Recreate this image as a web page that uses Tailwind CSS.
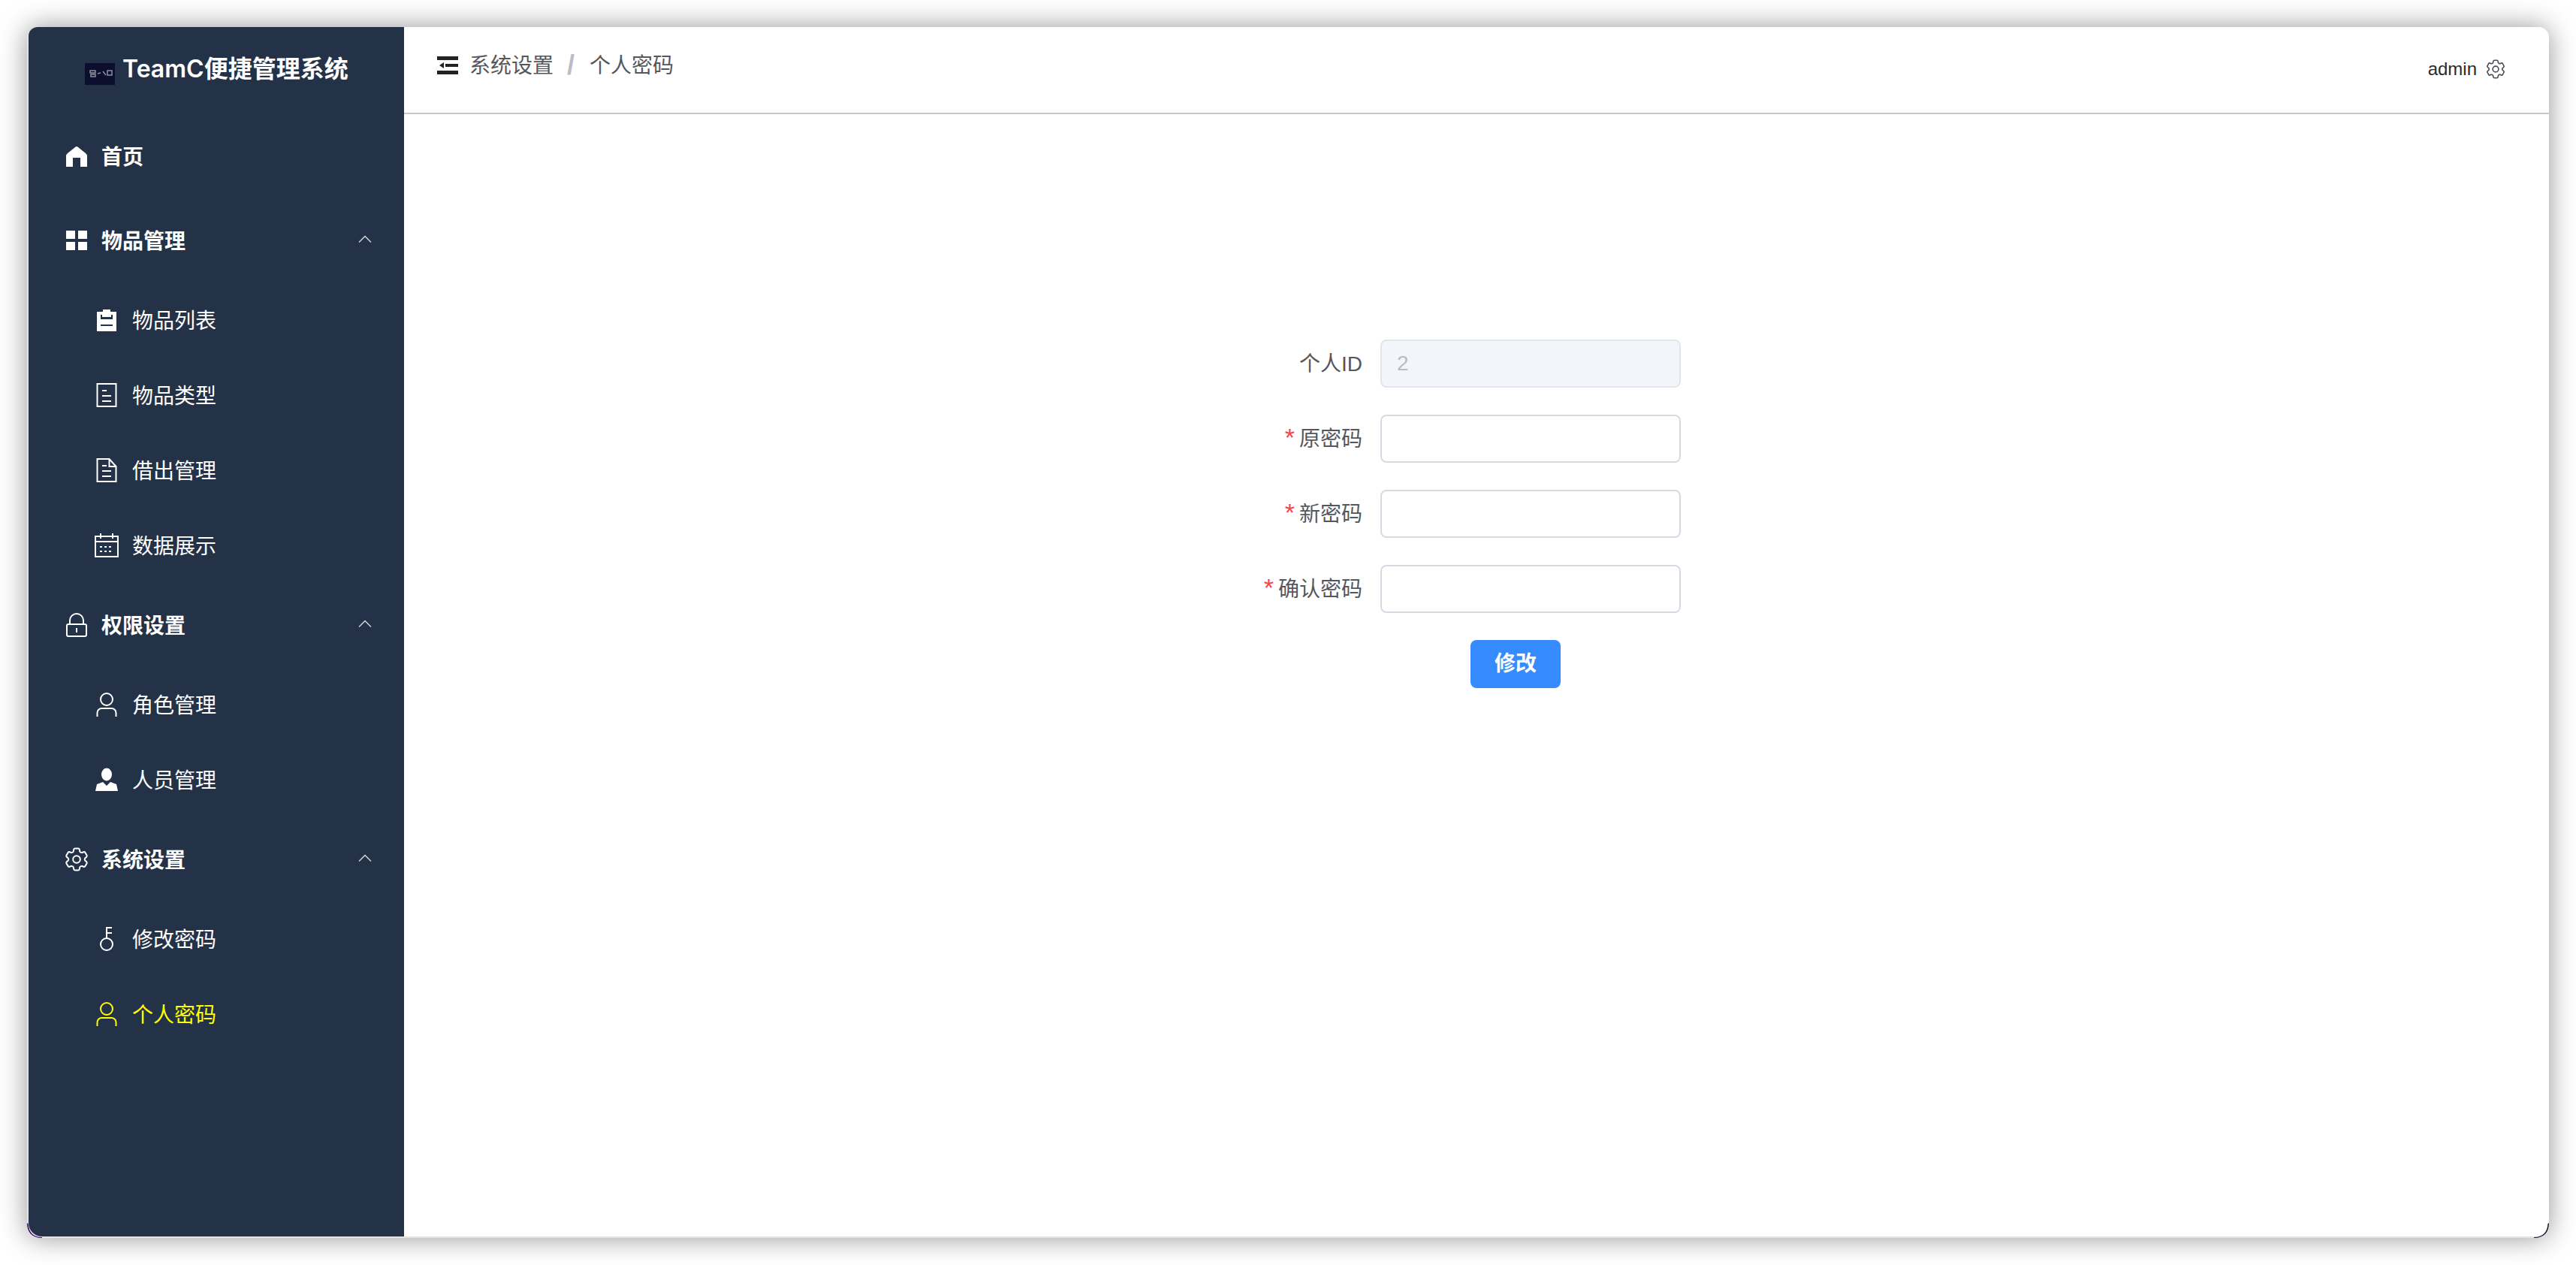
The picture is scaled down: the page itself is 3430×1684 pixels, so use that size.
<!DOCTYPE html>
<html lang="zh-CN">
<head>
    <meta charset="UTF-8">
    <title>TeamC便捷管理系统</title>
    <script src="https://cdn.jsdelivr.net/npm/@tailwindcss/browser@4"></script>
</head>
<body class="bg-white h-screen p-[36px] font-['Liberation_Sans','Noto_Sans_CJK_SC',sans-serif] overflow-hidden">
<div class="relative h-full flex rounded-[14px] bg-[#e3e3e3] border-l-2 border-b-2 border-[#e3e3e3] shadow-[0_0_36px_rgba(0,0,0,0.42)]">
    <!-- 侧边栏 -->
    <aside class="w-[500px] shrink-0 bg-[#233246] text-white rounded-tl-[12px] rounded-bl-[18px] overflow-hidden">
        <div class="h-[116px] flex items-start pl-[75px] pt-[36px]">
            <svg class="w-[40px] h-[29px] mt-[12px] shrink-0" viewBox="0 0 40 29">
                <rect width="40" height="29" fill="#0b0e2c"/>
                <path d="M7 10h7v3H7zM8 15h6v3H8zM17 14l4-1M24 11l4 5M30 10h6v6h-6z" fill="none" stroke="#8d8f9e" stroke-width="1.5"/>
            </svg>
            <span class="ml-[10px] text-[32px] leading-[40px] font-semibold whitespace-nowrap font-['Inter','Noto_Sans_CJK_SC',sans-serif]">TeamC便捷管理系统</span>
        </div>

        <div class="h-[112px] flex items-center pl-[48px] font-bold text-[28px]">
            <svg class="w-[32px] h-[32px] shrink-0" viewBox="0 0 32 32" fill="#fff"><path d="M16 3 Q17 3 18 4 L28 12 Q30 14 30 15 V30 H21 V18 H11 V30 H2 V15 Q2 14 4 12 L14 4 Q15 3 16 3Z"/></svg>
            <span class="ml-[17px] pt-[3px]">首页</span>
        </div>

        <div class="h-[112px] flex items-center pl-[48px] pr-[43px] font-bold text-[28px]">
            <svg class="w-[32px] h-[32px] shrink-0" viewBox="0 0 32 32" fill="#fff"><path d="M2 3h12v11H2zM18 3h12v11H18zM2 18h12v11H2zM18 18h12v11H18z"/></svg>
            <span class="ml-[17px] pt-[3px]">物品管理</span>
            <svg class="ml-auto mb-[5px] w-[18px] h-[10px]" viewBox="0 0 18 10" fill="none" stroke="#d0d4da" stroke-width="1.5"><path d="M1 9.5 9 1.5l8 8"/></svg>
        </div>
        <div class="h-[100px] flex items-center pl-[88px] text-[28px]">
            <svg class="w-[32px] h-[32px] shrink-0" viewBox="0 0 32 32"><path fill="#fff" d="M11 2h10v3h8v26H3V5h8z"/><path fill="#233246" d="M8 9h16v6H8zM8 22h16v2H8z"/><path fill="#fff" d="M10 9h12v3H10z"/></svg>
            <span class="ml-[18px] pt-[3px]">物品列表</span>
        </div>
        <div class="h-[100px] flex items-center pl-[88px] text-[28px]">
            <svg class="w-[32px] h-[32px] shrink-0" viewBox="0 0 32 32" fill="none" stroke="#fff" stroke-width="2"><path d="M3.5 1h25v30h-25zM10 10h6M10 17h12M10 24h12"/></svg>
            <span class="ml-[18px] pt-[3px]">物品类型</span>
        </div>
        <div class="h-[100px] flex items-center pl-[88px] text-[28px]">
            <svg class="w-[32px] h-[32px] shrink-0" viewBox="0 0 32 32" fill="none" stroke="#fff" stroke-width="2"><path d="M3.5 1h16l9 10v20h-25zM19.500 1v10h9M10 10h6M10 17h12M10 24h12"/></svg>
            <span class="ml-[18px] pt-[3px]">借出管理</span>
        </div>
        <div class="h-[100px] flex items-center pl-[88px] text-[28px]">
            <svg class="w-[32px] h-[32px] shrink-0" viewBox="0 0 32 32" fill="none" stroke="#fff" stroke-width="2"><path d="M1 4h30v27H1zM1 11h30M8 0v7M24 0v7"/><path stroke-dasharray="3 3" d="M7 18h18M7 24h18"/></svg>
            <span class="ml-[18px] pt-[3px]">数据展示</span>
        </div>

        <div class="h-[112px] flex items-center pl-[48px] pr-[43px] font-bold text-[28px]">
            <svg class="w-[32px] h-[32px] shrink-0" viewBox="0 0 32 32" fill="none" stroke="#fff" stroke-width="2"><rect x="3" y="15" width="26" height="16" rx="2"/><path d="M7 15v-5a9 9 0 0 1 18 0v5M16 20v6"/></svg>
            <span class="ml-[17px] pt-[3px]">权限设置</span>
            <svg class="ml-auto mb-[5px] w-[18px] h-[10px]" viewBox="0 0 18 10" fill="none" stroke="#d0d4da" stroke-width="1.5"><path d="M1 9.5 9 1.5l8 8"/></svg>
        </div>
        <div class="h-[100px] flex items-center pl-[88px] text-[28px]">
            <svg class="w-[32px] h-[32px] shrink-0" viewBox="0 0 32 32" fill="none" stroke="#fff" stroke-width="2"><circle cx="16" cy="9" r="8"/><path d="M3.500 32v-5a6 6 0 0 1 6-6h13a6 6 0 0 1 6 6v5"/></svg>
            <span class="ml-[18px] pt-[3px]">角色管理</span>
        </div>
        <div class="h-[100px] flex items-center pl-[88px] text-[28px]">
            <svg class="w-[32px] h-[32px] shrink-0" viewBox="0 0 32 32" fill="#fff"><ellipse cx="16" cy="9" rx="7" ry="8.500"/><path d="M1 31l2-9 8-3 5 5 5-5 8 3 2 9z"/></svg>
            <span class="ml-[18px] pt-[3px]">人员管理</span>
        </div>

        <div class="h-[112px] flex items-center pl-[48px] pr-[43px] font-bold text-[28px]">
            <svg class="w-[32px] h-[32px] shrink-0" viewBox="2 2 20 20" fill="none" stroke="#fff" stroke-width="1.250"><path d="M9.594 3.94c.09-.542.56-.94 1.11-.94h2.593c.55 0 1.02.398 1.11.94l.213 1.281c.063.374.313.686.645.87.074.04.147.083.22.127.325.196.72.257 1.075.124l1.217-.456a1.125 1.125 0 0 1 1.37.49l1.296 2.247a1.125 1.125 0 0 1-.26 1.431l-1.003.827c-.293.241-.438.613-.43.992a7.723 7.723 0 0 1 0 .255c-.008.378.137.75.43.991l1.004.827c.424.35.534.955.26 1.43l-1.298 2.247a1.125 1.125 0 0 1-1.369.491l-1.217-.456c-.355-.133-.75-.072-1.076.124a6.47 6.47 0 0 1-.22.128c-.331.183-.581.495-.644.869l-.213 1.281c-.09.543-.56.94-1.11.94h-2.594c-.55 0-1.019-.398-1.11-.94l-.213-1.281c-.062-.374-.312-.686-.644-.87a6.52 6.52 0 0 1-.22-.127c-.325-.196-.72-.257-1.076-.124l-1.217.456a1.125 1.125 0 0 1-1.369-.49l-1.297-2.247a1.125 1.125 0 0 1 .26-1.431l1.004-.827c.292-.24.437-.613.43-.991a6.932 6.932 0 0 1 0-.255c.007-.38-.138-.751-.43-.992l-1.004-.827a1.125 1.125 0 0 1-.26-1.43l1.297-2.247a1.125 1.125 0 0 1 1.37-.491l1.216.456c.356.133.751.072 1.076-.124.072-.044.146-.086.22-.128.332-.183.582-.495.644-.869l.214-1.28Z"/><circle cx="12" cy="12" r="3"/></svg>
            <span class="ml-[17px] pt-[3px]">系统设置</span>
            <svg class="ml-auto mb-[5px] w-[18px] h-[10px]" viewBox="0 0 18 10" fill="none" stroke="#d0d4da" stroke-width="1.5"><path d="M1 9.5 9 1.5l8 8"/></svg>
        </div>
        <div class="h-[100px] flex items-center pl-[88px] text-[28px]">
            <svg class="w-[32px] h-[32px] shrink-0" viewBox="0 0 32 32" fill="none" stroke="#fff" stroke-width="2"><circle cx="16" cy="23" r="8"/><path d="M16 15V1h7M16 8h7"/></svg>
            <span class="ml-[18px] pt-[3px]">修改密码</span>
        </div>
        <div class="h-[100px] flex items-center pl-[88px] text-[28px] text-[#ffff00]">
            <svg class="w-[32px] h-[32px] shrink-0" viewBox="0 0 32 32" fill="none" stroke="#ffff00" stroke-width="2"><circle cx="16" cy="9" r="8"/><path d="M3.500 32v-5a6 6 0 0 1 6-6h13a6 6 0 0 1 6 6v5"/></svg>
            <span class="ml-[18px] pt-[3px]">个人密码</span>
        </div>
    </aside>

    <div class="flex-1 flex flex-col bg-white rounded-tr-[14px] rounded-br-[18px] overflow-hidden">
        <!-- 顶栏 -->
        <header class="h-[116px] shrink-0 flex items-center border-b-2 border-[#c8c8c8] pl-[44px] pr-[58px]">
            <div class="flex items-center mb-[12px] text-[28px] text-[#55575c]">
                <svg class="w-[28px] h-[24px] shrink-0" viewBox="0 0 28 24" fill="#222"><path d="M0 0h28v5H0zM11 10h17v4H11zM9 8v8l-6-4zM0 19h28v5H0z"/></svg>
                <span class="ml-[15px] pt-[2px]">系统设置</span>
                <span class="ml-[18px] text-[36px] leading-[36px] font-bold text-[#b9bdc7]">/</span>
                <span class="ml-[20px] pt-[2px]">个人密码</span>
            </div>
            <div class="ml-auto flex items-center mb-[3px] text-[24px] text-[#2b2b2b]">
                <span>admin</span>
                <svg class="ml-[12px] w-[26px] h-[26px]" viewBox="2 2 20 20" fill="none" stroke="#4b4d52" stroke-width="1.250"><path d="M9.594 3.94c.09-.542.56-.94 1.11-.94h2.593c.55 0 1.02.398 1.11.94l.213 1.281c.063.374.313.686.645.87.074.04.147.083.22.127.325.196.72.257 1.075.124l1.217-.456a1.125 1.125 0 0 1 1.37.49l1.296 2.247a1.125 1.125 0 0 1-.26 1.431l-1.003.827c-.293.241-.438.613-.43.992a7.723 7.723 0 0 1 0 .255c-.008.378.137.75.43.991l1.004.827c.424.35.534.955.26 1.43l-1.298 2.247a1.125 1.125 0 0 1-1.369.491l-1.217-.456c-.355-.133-.75-.072-1.076.124a6.47 6.47 0 0 1-.22.128c-.331.183-.581.495-.644.869l-.213 1.281c-.09.543-.56.94-1.11.94h-2.594c-.55 0-1.019-.398-1.11-.94l-.213-1.281c-.062-.374-.312-.686-.644-.87a6.52 6.52 0 0 1-.22-.127c-.325-.196-.72-.257-1.076-.124l-1.217.456a1.125 1.125 0 0 1-1.369-.49l-1.297-2.247a1.125 1.125 0 0 1 .26-1.431l1.004-.827c.292-.24.437-.613.43-.991a6.932 6.932 0 0 1 0-.255c.007-.38-.138-.751-.43-.992l-1.004-.827a1.125 1.125 0 0 1-.26-1.43l1.297-2.247a1.125 1.125 0 0 1 1.37-.491l1.216.456c.356.133.751.072 1.076-.124.072-.044.146-.086.22-.128.332-.183.582-.495.644-.869l.214-1.28Z"/><circle cx="12" cy="12" r="3"/></svg>
            </div>
        </header>

        <!-- 个人密码表单 -->
        <main class="flex-1 pt-[300px] pl-[1076px] text-[28px] text-[#55575c]">
            <div class="flex items-center h-[64px] mb-[36px]">
                <label class="w-[200px] text-right pt-[2px]">个人ID</label>
                <div class="ml-[24px] w-[400px] h-[64px] flex items-center px-[20px] rounded-[8px] border-2 border-[#e2e5ec] bg-[#f2f5fa] text-[#b9bcc6]">2</div>
            </div>
            <div class="flex items-center h-[64px] mb-[36px]">
                <label class="w-[200px] text-right pt-[2px]"><span class="text-[34px] leading-[28px] text-[#f5454f] mr-[6px]">*</span>原密码</label>
                <input type="password" class="ml-[24px] w-[400px] h-[64px] rounded-[8px] border-2 border-[#d7dae2] bg-white">
            </div>
            <div class="flex items-center h-[64px] mb-[36px]">
                <label class="w-[200px] text-right pt-[2px]"><span class="text-[34px] leading-[28px] text-[#f5454f] mr-[6px]">*</span>新密码</label>
                <input type="password" class="ml-[24px] w-[400px] h-[64px] rounded-[8px] border-2 border-[#d7dae2] bg-white">
            </div>
            <div class="flex items-center h-[64px] mb-[36px]">
                <label class="w-[200px] text-right pt-[2px]"><span class="text-[34px] leading-[28px] text-[#f5454f] mr-[6px]">*</span>确认密码</label>
                <input type="password" class="ml-[24px] w-[400px] h-[64px] rounded-[8px] border-2 border-[#d7dae2] bg-white">
            </div>
            <button class="ml-[344px] w-[120px] h-[64px] rounded-[8px] bg-[#368cff] text-white font-bold">修改</button>
        </main>
    </div>

    <!-- 窗口圆角处露出的桌面 -->
    <svg class="absolute left-[-2px] bottom-[-2px] w-[20px] h-[20px]" viewBox="0 0 20 20"><path fill="#3f007a" d="M0 0 C0 12 6 20 20 20 L20 19 C8 19 2 12 1.500 1Z"/></svg>
    <svg class="absolute right-0 bottom-[-2px] w-[20px] h-[20px]" viewBox="0 0 20 20"><path fill="#1a1030" d="M20 0 C20 12 14 20 0 20 L0 19 C12 19 18 12 18.500 1Z"/></svg>
</div>
</body>
</html>
